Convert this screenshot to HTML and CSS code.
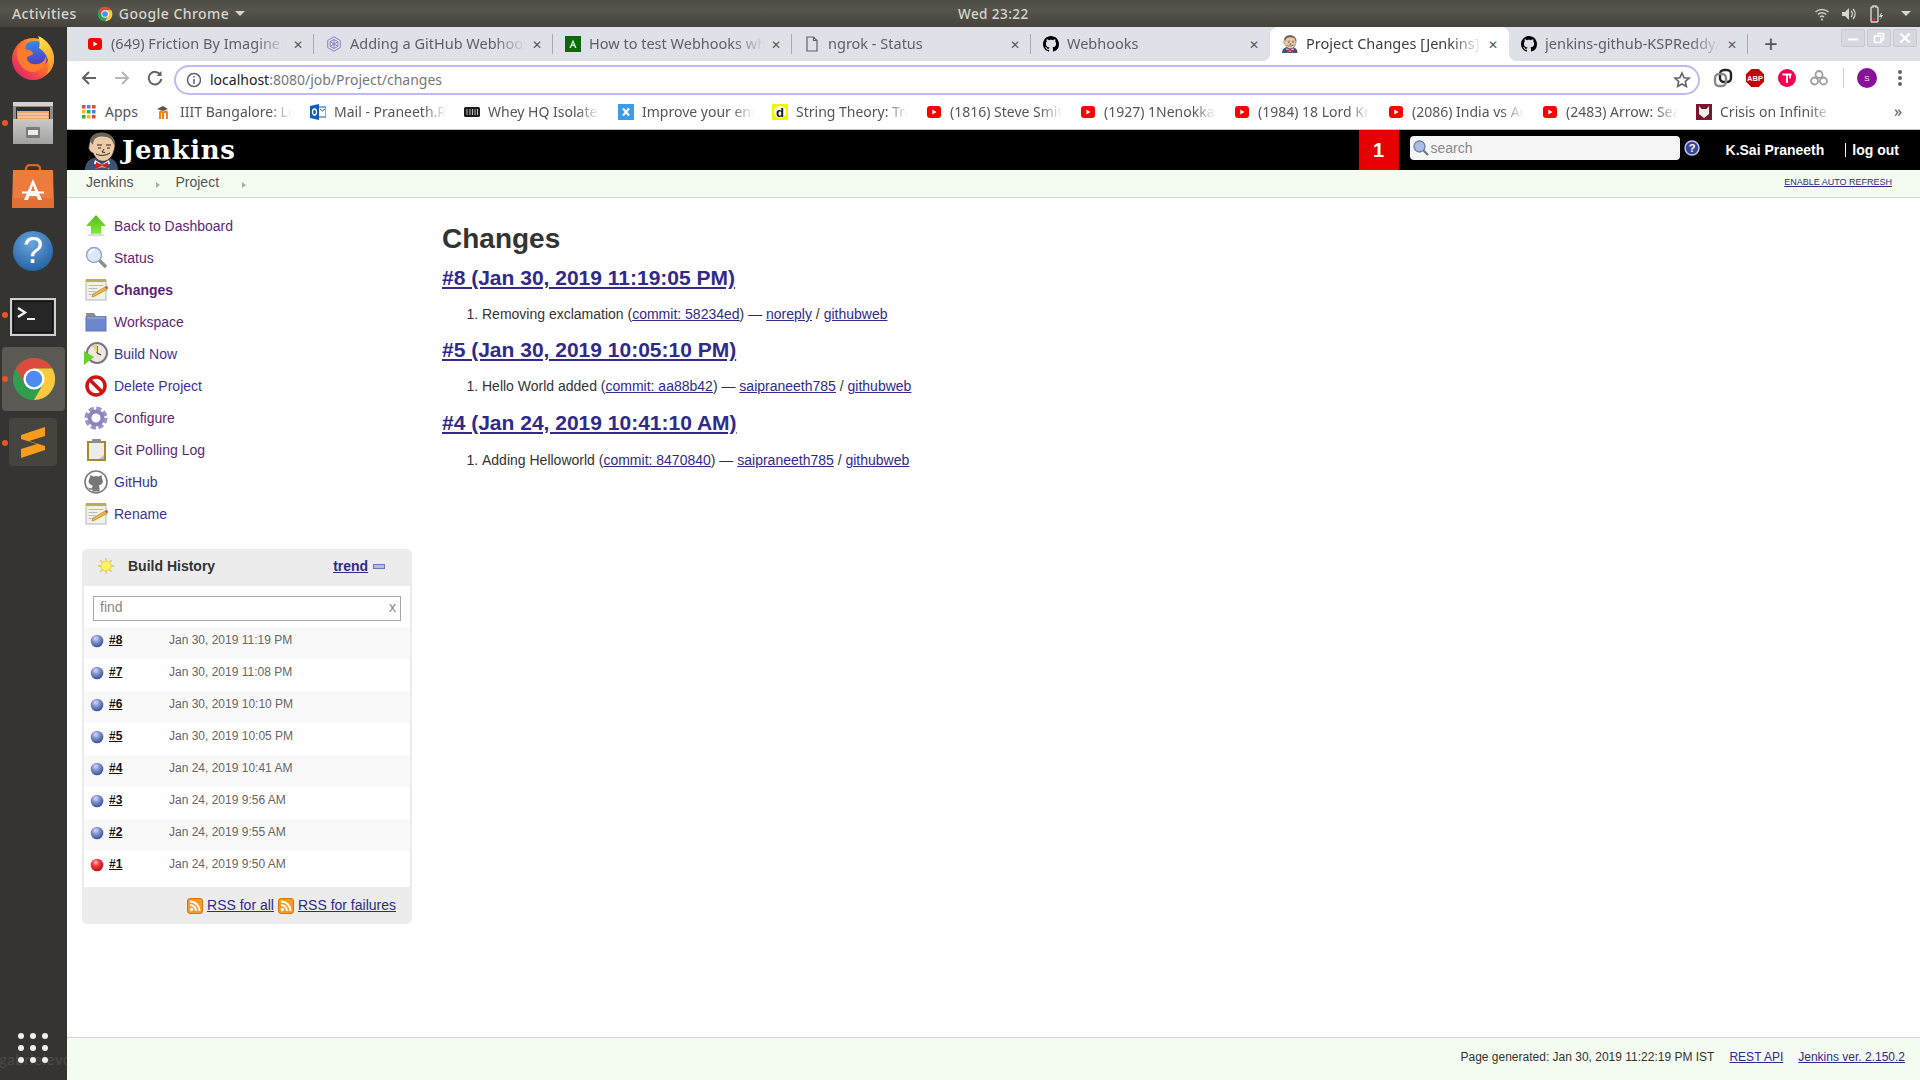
FILE: index.html
```html
<!DOCTYPE html>
<html>
<head>
  <meta charset="utf-8">
  <title>Project Changes [Jenkins]</title>
  <link rel="stylesheet" href="styles.css">
</head>
<body>
  <!-- shared icons -->
  <svg class="sprite" width="0" height="0">
    <defs>
      <radialGradient id="ball-blue" cx="40%" cy="30%" r="75%">
        <stop offset="0" stop-color="#d4dcf5"/><stop offset="0.45" stop-color="#7c8ccb"/><stop offset="1" stop-color="#39479a"/>
      </radialGradient>
      <radialGradient id="ball-red" cx="40%" cy="30%" r="75%">
        <stop offset="0" stop-color="#ffc0c0"/><stop offset="0.4" stop-color="#f5343c"/><stop offset="1" stop-color="#b80c14"/>
      </radialGradient>
      <radialGradient id="help-blue" cx="45%" cy="30%" r="80%">
        <stop offset="0" stop-color="#6aa5dc"/><stop offset="1" stop-color="#1c5a9c"/>
      </radialGradient>
      <linearGradient id="fox-body" x1="0.9" y1="0.1" x2="0.15" y2="0.9">
        <stop offset="0" stop-color="#ffb52e"/><stop offset="0.5" stop-color="#ff6a2a"/><stop offset="1" stop-color="#e0246a"/>
      </linearGradient>
      <linearGradient id="fox-globe" x1="0.4" y1="0" x2="0.6" y2="1">
        <stop offset="0" stop-color="#2f8fe8"/><stop offset="1" stop-color="#5b2ab5"/>
      </linearGradient>
      <linearGradient id="fox-tail" x1="0" y1="0" x2="0.3" y2="1">
        <stop offset="0" stop-color="#ffe84a"/><stop offset="1" stop-color="#ff9a2a"/>
      </linearGradient>
      <linearGradient id="cabinet-front" x1="0" y1="0" x2="0" y2="1">
        <stop offset="0" stop-color="#c9c9c7"/><stop offset="1" stop-color="#a2a2a0"/>
      </linearGradient>
      <linearGradient id="arrow-green" x1="0" y1="0" x2="0" y2="1">
        <stop offset="0" stop-color="#58b81c"/><stop offset="1" stop-color="#7cf03a"/>
      </linearGradient>
      <symbol id="i-github" viewBox="0 0 16 16">
        <path d="M8 0C3.58 0 0 3.58 0 8c0 3.54 2.29 6.53 5.47 7.59.4.07.55-.17.55-.38 0-.19-.01-.82-.01-1.49-2.01.37-2.53-.49-2.69-.94-.09-.23-.48-.94-.82-1.13-.28-.15-.68-.52-.01-.53.63-.01 1.08.58 1.23.82.72 1.21 1.87.87 2.33.66.07-.52.28-.87.51-1.07-1.78-.2-3.64-.89-3.64-3.95 0-.87.31-1.59.82-2.15-.08-.2-.36-1.02.08-2.12 0 0 .67-.21 2.2.82.64-.18 1.32-.27 2-.27.68 0 1.36.09 2 .27 1.53-1.04 2.2-.82 2.2-.82.44 1.1.16 1.92.08 2.12.51.56.82 1.27.82 2.15 0 3.07-1.87 3.75-3.65 3.95.29.25.54.73.54 1.48 0 1.07-.01 1.93-.01 2.2 0 .21.15.46.55.38A8.013 8.013 0 0016 8c0-4.42-3.58-8-8-8z"/>
      </symbol>
      <symbol id="i-yt" viewBox="0 0 16 14">
        <rect x="1" y="1" width="14" height="12" rx="3" fill="#f00"/>
        <path d="M6.3 4.5v5L10.6 7z" fill="#fff"/>
      </symbol>
      <symbol id="i-chrome" viewBox="0 0 48 48">
        <circle cx="24" cy="24" r="22" fill="#2f9e4f"/>
        <path d="M5 13A22 22 0 0 1 43.05 13H24L14.5 29.5z" fill="#dd4b3e"/>
        <path d="M24 13H43.05A22 22 0 0 1 24 46L33.5 29.5z" fill="#fdc83c"/>
        <circle cx="24" cy="24" r="11" fill="#fff"/>
        <circle cx="24" cy="24" r="8.6" fill="#4d8bf0"/>
      </symbol>
      <symbol id="i-jenkins" viewBox="0 0 34 38">
        <path d="M0 38c0-6 3-10 8-12l17 0c5 2 8 6 8 12z" fill="#3d5273"/>
        <path d="M5 9C6 3 12 0 19 1c7 1 12 6 11 13-1 6-3 11-6 13-3 3-9 3-12 0-2-2-3-4-4-6-3-1-5-4-4-7 0-2 1-4 1-5z" fill="#eccaa8" stroke="#2b2522" stroke-width=".8"/>
        <path d="M5 9C6 3 12 0 19 1c7 1 12 6 11 13-2-2-2-5-4-7-5-3-11-3-15-1-2 1-3 4-3 7-1-1-2-3-3-4z" fill="#6a645d"/>
        <path d="M12 13h5M21 13h5M13 16h3M22 16h3M11 22c4 2 9 2 14-1M19 17l-2 3 3 .5" fill="none" stroke="#2b2522" stroke-width="1"/>
        <path d="M10 28l7 4.500 7-4.500 1 4-8 .5 8 4.500-8-2-7 2 7-4.500-8-.5z" fill="#fff"/>
        <path d="M11 30l6 3 6-3v7l-6-3-6 3z" fill="#d42027"/>
      </symbol>
      <symbol id="i-notepad" viewBox="0 0 24 24">
        <rect x="2" y="2.500" width="20" height="19.500" fill="#f1f1ec" stroke="#b9b9b0"/>
        <rect x="2" y="1" width="20" height="3" fill="#b5b24e"/>
        <path d="M4.500 7.500h15M4.500 10.500h9M4.500 13.500h7M4.500 16.500h5" stroke="#bcbcb4"/>
        <path d="M8 19l1-3 12-7 2 2.500-12 6.500z" fill="#f2b63c" stroke="#8a6a20" stroke-width=".5"/>
        <path d="M21 9l2 2.500 1-1.500-1-2z" fill="#d83a2a"/>
      </symbol>
      <symbol id="i-rss" viewBox="0 0 16 16">
        <rect x=".5" y=".5" width="15" height="15" rx="2.500" fill="#f89a23" stroke="#d9730d"/>
        <circle cx="4.500" cy="11.500" r="1.700" fill="#fff"/>
        <path d="M3 7a6 6 0 0 1 6 6M3 3.500a9.500 9.500 0 0 1 9.500 9.500" fill="none" stroke="#fff" stroke-width="2"/>
      </symbol>
    </defs>
  </svg>

  <div class="topbar">
    <div class="top-left">
      <span class="top-activities">Activities</span>
      <svg class="top-chrome" width="16" height="16"><use href="#i-chrome"/></svg>
      <span>Google Chrome</span>
      <span class="caret"></span>
    </div>
    <span class="top-clock">Wed 23:22</span>
    <div class="top-right">
      <svg width="16" height="16" viewBox="0 0 16 16" fill="none" stroke="#c9c9c2" stroke-width="1.500">
        <path d="M1.500 6a9.500 9.500 0 0 1 13 0M3.800 8.500a6 6 0 0 1 8.400 0M6 11a3 3 0 0 1 4 0"/>
        <circle cx="8" cy="13.500" r="1" fill="#d8d8d2" stroke="none"/>
      </svg>
      <svg width="16" height="16" viewBox="0 0 16 16" fill="#d8d8d2">
        <path d="M1 6h3l4-4v12l-4-4H1z"/>
        <path d="M10 5a4 4 0 0 1 0 6M12 3a7 7 0 0 1 0 10" fill="none" stroke="#d8d8d2" stroke-width="1.200"/>
      </svg>
      <svg width="16" height="18" viewBox="0 0 16 18" fill="none">
        <path d="M4 2h1V1h3v1h1a1 1 0 0 1 1 1v13a1 1 0 0 1-1 1H4a1 1 0 0 1-1-1V3a1 1 0 0 1 1-1z" stroke="#d8d8d2" stroke-width="1.400"/>
        <rect x="4.500" y="13" width="3" height="2.500" fill="#d92b2b"/>
        <path d="M13 8l-2 4h2l-1 3 3-5h-2l1-2z" fill="#d8d8d2"/>
      </svg>
      <span class="caret"></span>
    </div>
  </div>

  <div class="desk">
    <nav class="dock">
      <div class="dock-item dock-fox">
        <svg width="44" height="44" viewBox="0 0 44 44">
          <circle cx="22" cy="23" r="21" fill="url(#fox-body)"/>
          <circle cx="24" cy="19" r="14" fill="url(#fox-globe)"/>
          <path d="M6 15c2-5 6-8 10-8-2 3-2 5-1 7 4-1 7 2 7 4-2 2-6 2-6 4 0 4 5 7 10 6 5 0 8-4 9-8 2 7-3 15-12 16C14 37 5 27 6 15z" fill="#ff7a2c"/>
          <path d="M27 0c9 3 17 14 16 25-1 6-3 10-7 13 4-9 1-21-8-26 1-4 1-8-1-12z" fill="url(#fox-tail)"/>
        </svg>
      </div>
      <div class="dock-item dock-running">
        <svg width="42" height="44" viewBox="0 0 42 44">
          <rect x="1" y="1" width="40" height="42" rx="2" fill="#8e8e8c"/>
          <rect x="1" y="1" width="40" height="4" fill="#d2d2d0"/>
          <rect x="4" y="6" width="34" height="12" fill="#2e2e2c"/>
          <rect x="5" y="10" width="32" height="8" fill="#eea367"/>
          <path d="M6 13h30M6 16h30" stroke="#fbe4cc"/>
          <rect x="1" y="18" width="40" height="25" fill="url(#cabinet-front)"/>
          <rect x="14" y="26" width="14" height="11" rx="1" fill="#7a7a78"/>
          <rect x="16" y="29" width="10" height="5" fill="#ececea"/>
        </svg>
      </div>
      <div class="dock-item dock-bag">
        <svg width="44" height="44" viewBox="0 0 44 44">
          <path d="M15 9V5a4 4 0 0 1 4-4h6a4 4 0 0 1 4 4v4" fill="none" stroke="#d9622a" stroke-width="2.500"/>
          <path d="M2 6h40l1 38H1z" fill="#ee7b3e"/>
          <path d="M1.300 34h41.400l.3 10H1z" fill="#e26f34"/>
          <path d="M22 15l9 21h-4l-1.500-4h-7L17 36h-4zM20 27h4l-2-6z" fill="#fff"/>
          <rect x="11" y="27.500" width="22" height="2" fill="#fff"/>
        </svg>
      </div>
      <div class="dock-item">
        <svg width="42" height="42" viewBox="0 0 42 42">
          <circle cx="21" cy="21" r="20" fill="url(#help-blue)"/>
          <text x="21" y="33" class="help-mark">?</text>
        </svg>
      </div>
      <div class="dock-item dock-running dock-term">
        <svg width="46" height="38" viewBox="0 0 46 38">
          <rect x="1" y="1" width="44" height="36" fill="#2b2b2b" stroke="#d0d0ce" stroke-width="2"/>
          <rect x="3.500" y="3.500" width="39" height="31" fill="#262626" stroke="#111"/>
          <path d="M8 10l7 4.500-7 4.500" fill="none" stroke="#eee" stroke-width="2.400"/>
          <path d="M17 21h8" stroke="#eee" stroke-width="2"/>
        </svg>
      </div>
      <div class="dock-item dock-running dock-focused">
        <svg width="46" height="46"><use href="#i-chrome"/></svg>
      </div>
      <div class="dock-item dock-running">
        <div class="dock-sublime">
          <svg width="24" height="31" viewBox="0 0 24 31" fill="#f99b1c">
            <path d="M24 0v9L8 14l16 5v4L0 31v-9l16-5L0 12V8z"/>
          </svg>
        </div>
      </div>
      <div class="dock-grid">
        <i></i><i></i><i></i><i></i><i></i><i></i><i></i><i></i><i></i>
      </div>
      <span class="dock-wallpaper">gabrielevo</span>
    </nav>

    <div class="browser">
      <div class="tabstrip">
        <div class="tab">
          <svg class="tab-icon" width="16" height="14"><use href="#i-yt"/></svg>
          <span class="tab-title">(649) Friction By Imagine Dragons</span>
          <span class="tab-close">&#x2715;</span>
        </div>
        <div class="tab">
          <svg class="tab-icon" width="16" height="16" viewBox="0 0 16 16" fill="none" stroke="#8a85c4">
            <path d="M8 .8l6.300 3.600v7.200L8 15.200l-6.300-3.600V4.400z"/>
            <path d="M8 3.500l3.900 2.200v4.600L8 12.500l-3.900-2.200V5.700zM8 3.500v9M4.100 5.700l7.800 4.600M11.900 5.700l-7.800 4.600"/>
          </svg>
          <span class="tab-title">Adding a GitHub Webhook in Jenkins</span>
          <span class="tab-close">&#x2715;</span>
        </div>
        <div class="tab">
          <svg class="tab-icon" width="16" height="16" viewBox="0 0 16 16">
            <rect width="16" height="16" fill="#0b6a0b"/>
            <path d="M8 3.500l3.500 8.500h-1.500l-.7-2H6.700L6 12H4.500zM7.200 8.800h1.600L8 6.400z" fill="#dff5df"/>
          </svg>
          <span class="tab-title">How to test Webhooks when you're developing</span>
          <span class="tab-close">&#x2715;</span>
        </div>
        <div class="tab">
          <svg class="tab-icon" width="16" height="16" viewBox="0 0 16 16" fill="none" stroke="#5f6368" stroke-width="1.200">
            <path d="M3 1h6.500L13 4.500V15H3zM9.500 1v3.500H13"/>
          </svg>
          <span class="tab-title">ngrok - Status</span>
          <span class="tab-close">&#x2715;</span>
        </div>
        <div class="tab tab-before-active">
          <svg class="tab-icon" width="16" height="16"><use href="#i-github"/></svg>
          <span class="tab-title">Webhooks</span>
          <span class="tab-close">&#x2715;</span>
        </div>
        <div class="tab tab-active">
          <svg class="tab-icon" width="16" height="18"><use href="#i-jenkins"/></svg>
          <span class="tab-title">Project Changes [Jenkins]</span>
          <span class="tab-close">&#x2715;</span>
        </div>
        <div class="tab">
          <svg class="tab-icon" width="16" height="16"><use href="#i-github"/></svg>
          <span class="tab-title">jenkins-github-KSPReddy/githubweb</span>
          <span class="tab-close">&#x2715;</span>
        </div>
        <span class="tab-new">+</span>
        <div class="win-buttons">
          <span class="win-btn"><svg width="12" height="12" viewBox="0 0 12 12"><path d="M1 7.500h10" stroke="#fff" stroke-width="2"/></svg></span>
          <span class="win-btn"><svg width="12" height="12" viewBox="0 0 12 12" fill="none" stroke="#fff" stroke-width="1.500"><path d="M4 1.500h6.500V8H8M1.500 4H8v6.500H1.500z"/></svg></span>
          <span class="win-btn"><svg width="12" height="12" viewBox="0 0 12 12"><path d="M1.500 1.500l9 9M10.500 1.500l-9 9" stroke="#fff" stroke-width="2"/></svg></span>
        </div>
      </div>

      <div class="toolbar">
        <span class="nav-btn">
          <svg width="16" height="16" viewBox="0 0 16 16" fill="none" stroke="#5f6368" stroke-width="2"><path d="M15 8H2M8 2L2 8l6 6"/></svg>
        </span>
        <span class="nav-btn">
          <svg width="16" height="16" viewBox="0 0 16 16" fill="none" stroke="#b4b6ba" stroke-width="2"><path d="M1 8h13M8 2l6 6-6 6"/></svg>
        </span>
        <span class="nav-btn">
          <svg width="16" height="16" viewBox="0 0 16 16" fill="none" stroke="#5f6368" stroke-width="2"><path d="M13.500 5A6.300 6.300 0 1 0 14.300 9"/><path d="M14.500 1v5h-5z" fill="#5f6368" stroke="none"/></svg>
        </span>
        <div class="omnibox">
          <svg width="16" height="16" viewBox="0 0 16 16" fill="none" stroke="#5f6368" stroke-width="1.500">
            <circle cx="8" cy="8" r="6.500"/><path d="M8 7v5M8 4v1.500"/>
          </svg>
          <span class="url"><b>localhost</b>:8080/job/Project/changes</span>
          <svg class="omni-star" width="18" height="18" viewBox="0 0 18 18" fill="none" stroke="#5f6368" stroke-width="1.600">
            <path d="M9 2l2.100 4.700 5 .5-3.800 3.300 1.100 5L9 13l-4.400 2.500 1.100-5L1.900 7.200l5-.5z"/>
          </svg>
        </div>
        <div class="ext-icons">
          <span class="ext">
            <svg width="20" height="20" viewBox="0 0 20 20" fill="none" stroke-width="2.400">
              <rect x="7" y="2" width="11" height="12" rx="4" stroke="#222"/><rect x="2" y="6" width="11" height="12" rx="4" stroke="#888"/>
            </svg>
          </span>
          <span class="ext">
            <svg width="18" height="18" viewBox="0 0 18 18">
              <path d="M5.300 0h7.400L18 5.300v7.400L12.700 18H5.300L0 12.700V5.300z" fill="#c80000"/>
              <text x="9" y="12" class="abp-mark">ABP</text>
            </svg>
          </span>
          <span class="ext">
            <svg width="18" height="18" viewBox="0 0 18 18">
              <circle cx="9" cy="9" r="9" fill="#f0004e"/>
              <path d="M4.500 5.500h9M9 5.500V14M12 5.500v4" stroke="#fff" stroke-width="1.800" fill="none"/>
            </svg>
          </span>
          <span class="ext">
            <svg width="18" height="18" viewBox="0 0 18 18" fill="none" stroke="#9b9ea2" stroke-width="1.800">
              <circle cx="9" cy="5.500" r="3.500"/><circle cx="4.500" cy="12" r="3.500"/><circle cx="13.500" cy="12" r="3.500"/>
            </svg>
          </span>
          <i class="ext-sep"></i>
          <span class="avatar">S</span>
          <span class="menu-dots"><i></i><i></i><i></i></span>
        </div>
      </div>

      <div class="bookmarks">
        <div class="bm bm-apps">
          <svg width="14" height="14" viewBox="0 0 14 14">
            <rect width="3.500" height="3.500" fill="#ea4335"/><rect x="5" width="3.500" height="3.500" fill="#4285f4"/><rect x="10" width="3.500" height="3.500" fill="#ea4335"/>
            <rect y="5" width="3.500" height="3.500" fill="#fbbc05"/><rect x="5" y="5" width="3.500" height="3.500" fill="#34a853"/><rect x="10" y="5" width="3.500" height="3.500" fill="#4285f4"/>
            <rect y="10" width="3.500" height="3.500" fill="#34a853"/><rect x="5" y="10" width="3.500" height="3.500" fill="#fbbc05"/><rect x="10" y="10" width="3.500" height="3.500" fill="#ea4335"/>
          </svg>
          <span class="bm-apps-label">Apps</span>
        </div>
        <div class="bm">
          <svg class="bm-icon" width="16" height="16" viewBox="0 0 16 16">
            <path d="M1 5l6-3 5 3-5 2z" fill="#555"/>
            <path d="M3 15V8c1-2 3-2 4 0 1-2 4-2 5 0v7h-2V9H8v6H6V9H5v6z" fill="#f98012"/>
          </svg>
          <span class="bm-title">IIIT Bangalore: Learning Management</span>
        </div>
        <div class="bm">
          <svg class="bm-icon" width="16" height="16" viewBox="0 0 16 16">
            <rect x="7" y="3" width="9" height="10" fill="#fff" stroke="#0f5fb8"/>
            <path d="M0 2l9-2v16l-9-2z" fill="#0f5fb8"/>
            <ellipse cx="4.500" cy="8" rx="2" ry="3" fill="none" stroke="#fff" stroke-width="1.300"/>
            <path d="M10 5l2.500 2L15 5" fill="none" stroke="#0f5fb8"/>
          </svg>
          <span class="bm-title">Mail - Praneeth.Reddy@iiitb.org</span>
        </div>
        <div class="bm">
          <svg class="bm-icon" width="16" height="16" viewBox="0 0 16 16">
            <rect y="3" width="16" height="10" rx="1.500" fill="#1c1c1c"/>
            <path d="M3 5v6M6 5v6M8.500 5v6M11 5v6M13.500 5v6" stroke="#bbb"/>
          </svg>
          <span class="bm-title">Whey HQ Isolate</span>
        </div>
        <div class="bm">
          <svg class="bm-icon" width="16" height="16" viewBox="0 0 16 16">
            <rect width="16" height="16" fill="#3d9be9"/>
            <path d="M5 4.500l6 7M11 4.500l-6 7" stroke="#fff" stroke-width="2"/>
          </svg>
          <span class="bm-title">Improve your english grammar</span>
        </div>
        <div class="bm">
          <svg class="bm-icon" width="16" height="16" viewBox="0 0 16 16">
            <rect width="16" height="16" fill="#f2f500"/>
            <circle cx="8" cy="8" r="6" fill="#fff"/>
            <text x="8" y="12.500" class="d-mark">d</text>
          </svg>
          <span class="bm-title">String Theory: Traversal Tutorial</span>
        </div>
        <div class="bm">
          <svg class="bm-icon" width="16" height="14"><use href="#i-yt"/></svg>
          <span class="bm-title">(1816) Steve Smith Batting Highlights</span>
        </div>
        <div class="bm">
          <svg class="bm-icon" width="16" height="14"><use href="#i-yt"/></svg>
          <span class="bm-title">(1927) 1Nenokkadine Movie Scenes</span>
        </div>
        <div class="bm">
          <svg class="bm-icon" width="16" height="14"><use href="#i-yt"/></svg>
          <span class="bm-title">(1984) 18 Lord Krishna Stories</span>
        </div>
        <div class="bm">
          <svg class="bm-icon" width="16" height="14"><use href="#i-yt"/></svg>
          <span class="bm-title">(2086) India vs Australia Highlights</span>
        </div>
        <div class="bm">
          <svg class="bm-icon" width="16" height="14"><use href="#i-yt"/></svg>
          <span class="bm-title">(2483) Arrow: Season Finale Scenes</span>
        </div>
        <div class="bm">
          <svg class="bm-icon" width="16" height="16" viewBox="0 0 16 16">
            <rect width="16" height="16" fill="#7a1730"/>
            <path d="M3 2l2.500 3h5L13 2v8l-5 4-5-4z" fill="#eee"/>
          </svg>
          <span class="bm-title">Crisis on Infinite Earths</span>
        </div>
        <span class="bm-more">&raquo;</span>
      </div>

      <header class="jk-header">
        <svg class="jk-butler" width="34" height="38"><use href="#i-jenkins"/></svg>
        <span class="jk-logo">Jenkins</span>
        <span class="jk-count">1</span>
        <div class="jk-search">
          <svg width="16" height="16" viewBox="0 0 16 16">
            <circle cx="6.500" cy="6.500" r="5.500" fill="#a9bde8" stroke="#6f7f9c" stroke-width="1.300"/>
            <path d="M10.500 10.500l4.500 4.500" stroke="#777" stroke-width="2.200"/>
          </svg>
          <span>search</span>
        </div>
        <svg class="jk-help" width="16" height="16" viewBox="0 0 16 16">
          <circle cx="8" cy="8" r="7" fill="#37459c" stroke="#c8cdf0" stroke-width="1.400"/>
          <text x="8" y="12" class="jk-help-mark">?</text>
        </svg>
        <span class="jk-user">K.Sai Praneeth</span>
        <span class="jk-logout">log out</span>
      </header>

      <div class="crumbs">
        <span>Jenkins</span><i class="crumb-arrow"></i>
        <span>Project</span><i class="crumb-arrow"></i>
        <a class="auto-refresh" href="#">ENABLE AUTO REFRESH</a>
      </div>

      <div class="page">
        <aside class="side">
          <div class="task">
            <svg width="24" height="24" viewBox="0 0 24 24">
              <path d="M12 1l10 11h-5v8H7v-8H2z" fill="url(#arrow-green)"/>
              <ellipse cx="12" cy="21" rx="9" ry="1.500" fill="#ddd"/>
            </svg>
            <a class="visited" href="#">Back to Dashboard</a>
          </div>
          <div class="task">
            <svg width="24" height="24" viewBox="0 0 24 24">
              <path d="M15 14l7 7" stroke="#8d8d8d" stroke-width="3.400"/>
              <circle cx="10" cy="9" r="7.500" fill="#dfe6fa" stroke="#9aa6c8" stroke-width="1.500"/>
              <path d="M5.500 8a5 5 0 0 1 5-4" stroke="#fff" stroke-width="1.500" fill="none"/>
            </svg>
            <a class="visited" href="#">Status</a>
          </div>
          <div class="task task-current">
            <svg width="24" height="24"><use href="#i-notepad"/></svg>
            <a class="visited" href="#">Changes</a>
          </div>
          <div class="task">
            <svg width="24" height="24" viewBox="0 0 24 24">
              <path d="M2 3h8l2 3h10v5H2z" fill="#8e8e8a"/>
              <rect x="2" y="7" width="20" height="14" fill="#6d87cc" stroke="#5f78bb"/>
              <path d="M3 8h18" stroke="#a5b6e4"/>
            </svg>
            <a class="visited" href="#">Workspace</a>
          </div>
          <div class="task">
            <svg width="24" height="24" viewBox="0 0 24 24">
              <circle cx="13" cy="11" r="10" fill="#eee9dc" stroke="#7d6f98" stroke-width="2"/>
              <path d="M13 11V4M13 11l4 2" stroke="#333" stroke-width="1.200"/>
              <path d="M13 11L8 3.500a9 9 0 0 1 5-1.500z" fill="#dcd77a"/>
              <path d="M0 9l10 6-10 8z" fill="#68d030"/>
            </svg>
            <a href="#">Build Now</a>
          </div>
          <div class="task">
            <svg width="24" height="24" viewBox="0 0 24 24">
              <circle cx="12" cy="12" r="9" fill="#fff" stroke="#d01414" stroke-width="3.500"/>
              <path d="M6 6l12 12" stroke="#d01414" stroke-width="3.500"/>
            </svg>
            <a href="#">Delete Project</a>
          </div>
          <div class="task">
            <svg width="24" height="24" viewBox="0 0 24 24" fill="none">
              <circle cx="12" cy="12" r="9.500" stroke="#9b93c9" stroke-width="4" stroke-dasharray="5 2.460"/>
              <circle cx="12" cy="12" r="6.500" stroke="#8d84bd" stroke-width="4"/>
            </svg>
            <a class="visited" href="#">Configure</a>
          </div>
          <div class="task">
            <svg width="24" height="24" viewBox="0 0 24 24">
              <rect x="3" y="3" width="19" height="20" fill="#a8882c"/>
              <rect x="5" y="5" width="15" height="16" fill="#ececea"/>
              <path d="M20 21l-5 0 5-4z" fill="#bbb"/>
              <rect x="8" y="1" width="9" height="4" rx="1" fill="#8d8d8d"/>
            </svg>
            <a class="visited" href="#">Git Polling Log</a>
          </div>
          <div class="task">
            <svg width="24" height="24" viewBox="0 0 24 24">
              <circle cx="12" cy="12" r="11" fill="#fff" stroke="#7d7d7d" stroke-width="1.600"/>
              <path d="M6.500 5l3 1.500a8 8 0 0 1 5 0l3-1.500.5 3.500c2 3 .5 6.500-3.500 7 .7.700 1 1.500 1 3v3h-7v-2c-2 .5-3.500 0-4.500-2 1 .5 2 1 4 .5 0-1 .3-1.800 1-2.500-4-.5-5.500-4-3.500-7z" fill="#777"/>
            </svg>
            <a href="#">GitHub</a>
          </div>
          <div class="task">
            <svg width="24" height="24"><use href="#i-notepad"/></svg>
            <a href="#">Rename</a>
          </div>

          <section class="history">
            <div class="history-head">
              <svg width="16" height="16" viewBox="0 0 16 16">
                <path d="M8 0v16M0 8h16M2.300 2.300l11.400 11.400M13.700 2.300L2.300 13.700" stroke="#e8c940" stroke-width="1.400"/>
                <circle cx="8" cy="8" r="5" fill="#fdf06a" stroke="#ead54e"/>
              </svg>
              <span class="history-title">Build History</span>
              <a class="history-trend" href="#">trend</a>
              <i class="history-minus"></i>
            </div>
            <div class="history-find">
              <div class="find-box"><span>find</span><span>x</span></div>
            </div>
            <ul class="builds">
              <li><svg width="14" height="14"><circle cx="7" cy="7" r="6.300" fill="url(#ball-blue)"/></svg><a href="#">#8</a><span>Jan 30, 2019 11:19 PM</span></li>
              <li><svg width="14" height="14"><circle cx="7" cy="7" r="6.300" fill="url(#ball-blue)"/></svg><a href="#">#7</a><span>Jan 30, 2019 11:08 PM</span></li>
              <li><svg width="14" height="14"><circle cx="7" cy="7" r="6.300" fill="url(#ball-blue)"/></svg><a href="#">#6</a><span>Jan 30, 2019 10:10 PM</span></li>
              <li><svg width="14" height="14"><circle cx="7" cy="7" r="6.300" fill="url(#ball-blue)"/></svg><a href="#">#5</a><span>Jan 30, 2019 10:05 PM</span></li>
              <li><svg width="14" height="14"><circle cx="7" cy="7" r="6.300" fill="url(#ball-blue)"/></svg><a href="#">#4</a><span>Jan 24, 2019 10:41 AM</span></li>
              <li><svg width="14" height="14"><circle cx="7" cy="7" r="6.300" fill="url(#ball-blue)"/></svg><a href="#">#3</a><span>Jan 24, 2019 9:56 AM</span></li>
              <li><svg width="14" height="14"><circle cx="7" cy="7" r="6.300" fill="url(#ball-blue)"/></svg><a href="#">#2</a><span>Jan 24, 2019 9:55 AM</span></li>
              <li><svg width="14" height="14"><circle cx="7" cy="7" r="6.300" fill="url(#ball-red)"/></svg><a href="#">#1</a><span>Jan 24, 2019 9:50 AM</span></li>
            </ul>
            <div class="history-foot">
              <svg width="16" height="16"><use href="#i-rss"/></svg>
              <a href="#">RSS for all</a>
              <svg width="16" height="16"><use href="#i-rss"/></svg>
              <a href="#">RSS for failures</a>
            </div>
          </section>
        </aside>

        <main class="changes">
          <h1>Changes</h1>
          <section class="change">
            <h2><a href="#">#8 (Jan 30, 2019 11:19:05 PM)</a></h2>
            <ol>
              <li>Removing exclamation (<a href="#">commit: 58234ed</a>) &mdash; <a href="#">noreply</a> / <a href="#">githubweb</a></li>
            </ol>
          </section>
          <section class="change">
            <h2><a href="#">#5 (Jan 30, 2019 10:05:10 PM)</a></h2>
            <ol>
              <li>Hello World added (<a href="#">commit: aa88b42</a>) &mdash; <a href="#">saipraneeth785</a> / <a href="#">githubweb</a></li>
            </ol>
          </section>
          <section class="change">
            <h2><a href="#">#4 (Jan 24, 2019 10:41:10 AM)</a></h2>
            <ol>
              <li>Adding Helloworld (<a href="#">commit: 8470840</a>) &mdash; <a href="#">saipraneeth785</a> / <a href="#">githubweb</a></li>
            </ol>
          </section>
        </main>
      </div>

      <footer class="jk-footer">
        <span>Page generated: Jan 30, 2019 11:22:19 PM IST</span>
        <a href="#">REST API</a>
        <a href="#">Jenkins ver. 2.150.2</a>
      </footer>
    </div>
  </div>
</body>
</html>
```

FILE: styles.css
```css
html, body {
  margin: 0;
  height: 100%;
}

body {
  display: flex;
  flex-direction: column;
  height: 100vh;
  overflow: hidden;
  font-family: "Liberation Sans", Arial, sans-serif;
  font-size: 14px;
  color: #333;
  background: #fff;
}

.sprite {
  display: block;
  flex: none;
}

a {
  color: #2f2a8c;
}

/* ubuntu top bar */
.topbar {
  display: flex;
  align-items: center;
  flex: none;
  height: 27px;
  font-family: "Noto Sans", sans-serif;
  font-size: 14px;
  font-weight: 500;
  letter-spacing: 0.45px;
  color: #d6d6cf;
  background: linear-gradient(#4e4b44, #57544c 35%, #45433c);
}

.top-left {
  display: flex;
  align-items: center;
  width: 946px;
  padding-left: 12px;
}

.top-activities {
  margin-right: 20px;
}

.top-chrome {
  margin-right: 6px;
}

.top-clock {
  font-size: 13.500px;
}

.caret {
  display: inline-block;
  width: 0;
  height: 0;
  margin-left: 6px;
  border-left: 5px solid transparent;
  border-right: 5px solid transparent;
  border-top: 5px solid #d6d6cf;
}

.top-right {
  display: flex;
  align-items: center;
  gap: 11px;
  margin-left: auto;
  padding-right: 9px;
}

/* dock */
.desk {
  display: flex;
  flex: 1;
  min-height: 0;
}

.dock {
  position: relative;
  display: flex;
  flex-direction: column;
  flex: none;
  width: 67px;
  padding-right: 1px;
  box-sizing: border-box;
  background: #353430;
  overflow: hidden;
}

.dock-item {
  position: relative;
  display: flex;
  align-items: center;
  justify-content: center;
  height: 64px;
}

.dock-running::before {
  content: "";
  position: absolute;
  left: 2px;
  top: 29px;
  width: 6px;
  height: 6px;
  border-radius: 50%;
  background: #e95420;
}

.dock-fox svg {
  margin-bottom: 2px;
}

.dock-bag svg {
  margin-bottom: 3px;
}

.dock-term svg {
  margin-top: 3px;
}

.dock-focused {
  margin: 0 1px 0 2px;
  border-radius: 4px;
  background: #5a5954;
}

.dock-focused::before {
  left: 0;
}

.dock-sublime {
  display: flex;
  align-items: center;
  justify-content: center;
  width: 48px;
  height: 48px;
  margin-bottom: 2px;
  border-radius: 4px;
  background: #45443f;
}

.help-mark {
  font-family: "Liberation Sans", sans-serif;
  font-size: 36px;
  fill: #fff;
  text-anchor: middle;
}

.dock-grid {
  display: grid;
  grid-template-columns: repeat(3, 6px);
  gap: 6px;
  justify-content: center;
  margin-top: auto;
  padding-bottom: 17px;
  position: relative;
  z-index: 1;
}

.dock-grid i {
  width: 6px;
  height: 6px;
  border-radius: 50%;
  background: #eee;
}

.dock-wallpaper {
  position: absolute;
  left: -1px;
  bottom: 12px;
  font-family: "Lato", sans-serif;
  font-size: 15px;
  letter-spacing: 0.5px;
  color: #4b4a46;
  white-space: nowrap;
}

/* chrome */
.browser {
  display: flex;
  flex-direction: column;
  flex: 1;
  min-width: 0;
}

.tabstrip {
  display: flex;
  align-items: center;
  flex: none;
  height: 34px;
  padding-left: 8px;
  font-family: "Noto Sans", sans-serif;
  font-size: 14.500px;
  color: #5f6065;
  background: #dee1e7;
}

.tab {
  position: relative;
  display: flex;
  align-items: center;
  flex: none;
  width: 239px;
  height: 34px;
  padding-left: 12px;
  box-sizing: border-box;
}

.tab::after {
  content: "";
  flex: none;
  width: 1px;
  height: 20px;
  background: #a8aab0;
}

.tab-icon {
  flex: none;
  margin-right: 8px;
}

.tab-title {
  flex: 1;
  min-width: 0;
  margin-bottom: 2px;
  overflow: hidden;
  white-space: nowrap;
  -webkit-mask-image: linear-gradient(to right, #000 82%, transparent);
  mask-image: linear-gradient(to right, #000 82%, transparent);
}

.tab-close {
  flex: none;
  width: 12px;
  margin: 0 9px 0 5px;
  font-size: 12px;
  text-align: center;
  color: #55575c;
}

.tab-before-active::after,
.tab-active::after {
  background: transparent;
}

.tab-active {
  border-radius: 8px 8px 0 0;
  color: #3c4043;
  background: #fff;
}

.tab-active::before,
.tab-active .tab-close::after {
  content: "";
  position: absolute;
  bottom: 0;
  width: 8px;
  height: 8px;
}

.tab-active::before {
  left: -8px;
  background: radial-gradient(circle at 0 0, transparent 8px, #fff 8.500px);
}

.tab-active .tab-close::after {
  right: -8px;
  background: radial-gradient(circle at 100% 0, transparent 8px, #fff 8.500px);
}

.tab-new {
  margin-left: 16px;
  font-size: 24px;
  line-height: 24px;
  color: #55575c;
}

.win-buttons {
  display: flex;
  gap: 2px;
  margin-left: auto;
  margin-right: 3px;
  align-self: flex-start;
  margin-top: 2px;
}

.win-btn {
  display: flex;
  align-items: center;
  justify-content: center;
  width: 22px;
  height: 16px;
  border: 1px solid #c6c9cf;
  border-radius: 2px;
  background: #d5d8de;
}

.toolbar {
  display: flex;
  align-items: center;
  flex: none;
  height: 34px;
  padding-left: 5px;
  background: #fff;
}

.nav-btn {
  display: flex;
  align-items: center;
  justify-content: center;
  width: 33px;
}

.omnibox {
  display: flex;
  align-items: center;
  flex: none;
  width: 1526px;
  height: 30px;
  margin-left: 3px;
  margin-top: 4px;
  padding: 0 7px 0 10px;
  box-sizing: border-box;
  border: 2px solid #c1b8f7;
  border-radius: 15px;
}

.url {
  margin-left: 8px;
  margin-bottom: 2px;
  font-family: "Noto Sans", sans-serif;
  font-size: 14px;
  color: #75777c;
}

.url b {
  font-weight: 400;
  color: #222;
}

.omni-star {
  margin-left: auto;
}

.ext-icons {
  display: flex;
  align-items: center;
  margin-left: 7px;
}

.ext {
  display: flex;
  align-items: center;
  justify-content: center;
  width: 32px;
}

.abp-mark {
  font-family: "Liberation Sans", sans-serif;
  font-size: 7.500px;
  font-weight: 700;
  fill: #fff;
  text-anchor: middle;
}

.ext-sep {
  width: 1px;
  height: 20px;
  margin: 0 13px 0 8px;
  background: #ccc;
}

.avatar {
  display: flex;
  align-items: center;
  justify-content: center;
  width: 20px;
  height: 20px;
  border-radius: 50%;
  font-size: 8px;
  color: #eee;
  background: #8a0fa0;
}

.menu-dots {
  display: flex;
  flex-direction: column;
  gap: 2px;
  margin-left: 21px;
}

.menu-dots i {
  width: 4px;
  height: 4px;
  border-radius: 50%;
  background: #5f6368;
}

.bookmarks {
  display: flex;
  align-items: center;
  flex: none;
  height: 34px;
  padding-left: 15px;
  border-bottom: 1px solid #c4c4c4;
  font-family: "Noto Sans", sans-serif;
  font-size: 14px;
  color: #55565b;
  background: #fff;
}

.bm {
  display: flex;
  align-items: center;
  flex: none;
  width: 154px;
}

.bm-apps {
  width: 74px;
}

.bm-apps-label {
  margin-left: 9px;
  margin-bottom: 2px;
}

.bm-icon {
  flex: none;
  margin-right: 8px;
}

.bm-title {
  width: 112px;
  margin-bottom: 2px;
  overflow: hidden;
  white-space: nowrap;
  -webkit-mask-image: linear-gradient(to right, #000 80%, transparent);
  mask-image: linear-gradient(to right, #000 80%, transparent);
}

.d-mark {
  font-family: "Liberation Sans", sans-serif;
  font-size: 13px;
  font-weight: 700;
  fill: #111;
  text-anchor: middle;
}

.bm-more {
  margin-left: 44px;
  margin-bottom: 2px;
  font-size: 16px;
}

/* jenkins header */
.jk-header {
  display: flex;
  align-items: center;
  flex: none;
  height: 40px;
  padding-left: 18px;
  color: #fff;
  background: #000;
}

.jk-butler {
  align-self: flex-end;
  flex: none;
}

.jk-logo {
  margin-left: 3px;
  margin-bottom: 1px;
  font-family: "DejaVu Serif", serif;
  font-size: 26px;
  font-weight: 700;
  letter-spacing: 0.6px;
}

.jk-count {
  display: flex;
  align-items: center;
  justify-content: center;
  width: 40px;
  height: 40px;
  margin-left: auto;
  font-size: 20px;
  font-weight: 700;
  background: #e60000;
}

.jk-search {
  display: flex;
  align-items: center;
  width: 270px;
  height: 24px;
  margin-left: 11px;
  margin-bottom: 4px;
  padding-left: 3px;
  box-sizing: border-box;
  border-radius: 4px;
  font-size: 14px;
  color: #888;
  background: #f6f6f6;
}

.jk-search span {
  margin-left: 2px;
}

.jk-help {
  flex: none;
  margin-left: 4px;
  margin-bottom: 4px;
}

.jk-help-mark {
  font-family: "Liberation Sans", sans-serif;
  font-size: 11px;
  font-weight: 700;
  fill: #fff;
  text-anchor: middle;
}

.jk-user {
  margin-left: 26px;
  font-weight: 700;
}

.jk-logout {
  margin: 0 21px 0 21px;
  padding-left: 6px;
  border-left: 1px solid #fff;
  line-height: 14px;
  font-weight: 700;
}

.crumbs {
  display: flex;
  align-items: center;
  flex: none;
  height: 27px;
  padding: 0 28px 3px 19px;
  box-sizing: content-box;
  height: 24px;
  border-bottom: 1px solid #d3d7cf;
  color: #555;
  background: #f4fcf2;
}

.crumb-arrow {
  width: 0;
  height: 0;
  margin: 6px 15px 0 23px;
  border-top: 3px solid transparent;
  border-bottom: 3px solid transparent;
  border-left: 4px solid #aaa;
}

.auto-refresh {
  margin-left: auto;
  font-size: 9px;
}

/* main area */
.page {
  display: flex;
  flex: 1;
  min-height: 0;
}

.side {
  flex: none;
  width: 330px;
  padding: 12px 30px 0 15px;
}

.task {
  display: flex;
  align-items: center;
  gap: 6px;
  height: 32px;
  padding-left: 2px;
}

.task a {
  text-decoration: none;
  color: #38359a;
}

.task a.visited {
  color: #5e1f78;
}

.task-current a.visited {
  font-weight: 700;
}

.history {
  margin-top: 19px;
  border: 1px solid #ececec;
  border-width: 0 2px;
  border-radius: 5px;
  overflow: hidden;
}

.history-head {
  display: flex;
  align-items: center;
  height: 34px;
  padding: 0 0 3px 14px;
  background: #ececec;
}

.history-title {
  margin-left: 14px;
  font-weight: 700;
  color: #333;
}

.history-trend {
  margin-left: 118px;
  font-weight: 700;
}

.history-minus {
  width: 12px;
  height: 5px;
  margin: 1px 0 0 5px;
  box-sizing: border-box;
  border: 1px solid #6d78b8;
  background: #b5bde6;
}

.history-find {
  padding: 10px 9px 6px 9px;
}

.find-box {
  display: flex;
  justify-content: space-between;
  height: 25px;
  padding: 0 4px 0 6px;
  box-sizing: border-box;
  border: 1px solid #a8a8a8;
  line-height: 20px;
  color: #888;
}

.builds {
  margin: 0;
  padding: 0;
  list-style: none;
}

.builds li {
  display: flex;
  height: 32px;
  padding-left: 6px;
  padding-top: 6px;
  box-sizing: border-box;
  font-size: 12px;
  line-height: 14px;
  color: #666;
}

.builds li:nth-child(odd) {
  background: #f9f9f9;
}

.builds svg {
  flex: none;
  margin-top: 1px;
}

.builds a {
  width: 60px;
  margin-left: 5px;
  font-weight: 700;
  color: #111;
}

.history-foot {
  display: flex;
  align-items: center;
  justify-content: flex-end;
  gap: 4px;
  height: 37px;
  margin-top: 4px;
  padding-right: 14px;
  background: #ececec;
}

.history-foot a {
  margin-bottom: 2px;
}

.changes {
  flex: 1;
  padding-top: 25px;
}

.changes h1 {
  margin: 0 0 11px;
  font-size: 28px;
  line-height: 32px;
  color: #333;
}

.change {
  margin-bottom: 14.450px;
}

.change h2 {
  margin: 0 0 14px;
  font-size: 21px;
  line-height: 24px;
}

.change:last-child h2 {
  margin-bottom: 15px;
}

.change ol {
  margin: 0;
  padding-left: 40px;
  line-height: 20px;
}

.jk-footer {
  display: flex;
  align-items: center;
  justify-content: flex-end;
  gap: 15px;
  flex: none;
  height: 38px;
  padding: 0 15px 4px 0;
  border-top: 1px solid #d3d7cf;
  font-size: 12px;
  color: #333;
  background: #f4fcf2;
}
```
